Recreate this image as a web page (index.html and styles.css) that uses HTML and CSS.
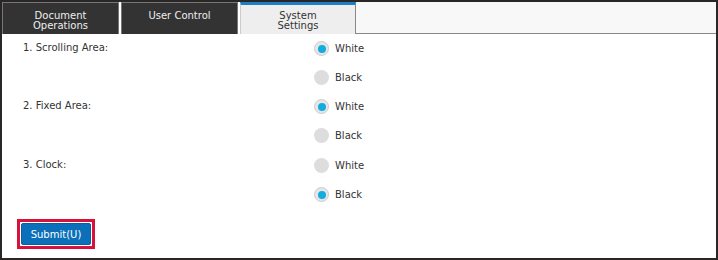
FILE: index.html
```html
<!DOCTYPE html>
<html lang="en">
<head>
	<meta charset="UTF-8">
	<title>System Settings</title>
	<link rel="stylesheet" href="styles.css">
</head>
<body>
	<div class="frame">
		<ul class="tabs">
			<li class="tab">Document<br>Operations</li>
			<li class="tab">User Control</li>
			<li class="tab active">System<br>Settings</li>
			<li class="tabFill"></li>
		</ul>
		<div class="content">
			<div class="group">
				<div class="label">1. Scrolling Area:</div>
				<ul class="options">
					<li><span class="radio on"></span>White</li>
					<li><span class="radio"></span>Black</li>
				</ul>
			</div>
			<div class="group">
				<div class="label">2. Fixed Area:</div>
				<ul class="options">
					<li><span class="radio on"></span>White</li>
					<li><span class="radio"></span>Black</li>
				</ul>
			</div>
			<div class="group last">
				<div class="label">3. Clock:</div>
				<ul class="options">
					<li><span class="radio"></span>White</li>
					<li><span class="radio on"></span>Black</li>
				</ul>
			</div>
			<div class="actions">
				<span class="focusRing"><button class="submit">Submit(U)</button></span>
			</div>
		</div>
	</div>
</body>
</html>
```
FILE: styles.css
```css
*{box-sizing:border-box;}
body{margin:0;font-family:"DejaVu Sans",Verdana,sans-serif;font-size:10px;color:#333;}
ul{list-style:none;padding:0;margin:0;}
.frame{width:718px;height:260px;border:2px solid #2b2626;background:#fff;}
.tabs{display:flex;height:32px;}
.tab{width:117px;margin-right:2px;padding-top:8px;background:#333;color:#eee;border:1px solid #777;border-bottom:none;text-align:center;line-height:10px;}
.tab.active{width:116px;margin-right:0;background:#eee;color:#333;border-top:3px solid #1c7dc8;border-right:1px solid #888;border-left:1px solid #ccc;padding-top:6px;}
.tabFill{flex:1;background:#f8f8f8;border-bottom:1px solid #888;}
.content{padding:0 0 0 21px;}
.group{display:flex;}
.group.last{margin-top:1px;}
.label{width:291px;line-height:27px;}
.options li{display:flex;align-items:center;height:29px;}
.radio{width:15px;height:15px;border-radius:50%;background:#ddd;margin-right:6px;display:flex;align-items:center;justify-content:center;}
.radio.on{border:1px solid #ccc;background:#e6e6e6;}
.radio.on::after{content:"";width:8px;height:8px;border-radius:50%;background:#12acdf;}
.actions{margin-top:10px;margin-left:-6px;}
.focusRing{display:inline-block;border:3px solid #d9123c;padding:1px;}
.submit{display:block;width:70px;height:22px;border:1px solid #0a5fa3;border-radius:2px;background:#0b6fb9;color:#fff;font-family:"DejaVu Sans",Verdana,sans-serif;font-size:10px;padding:0;}
```
